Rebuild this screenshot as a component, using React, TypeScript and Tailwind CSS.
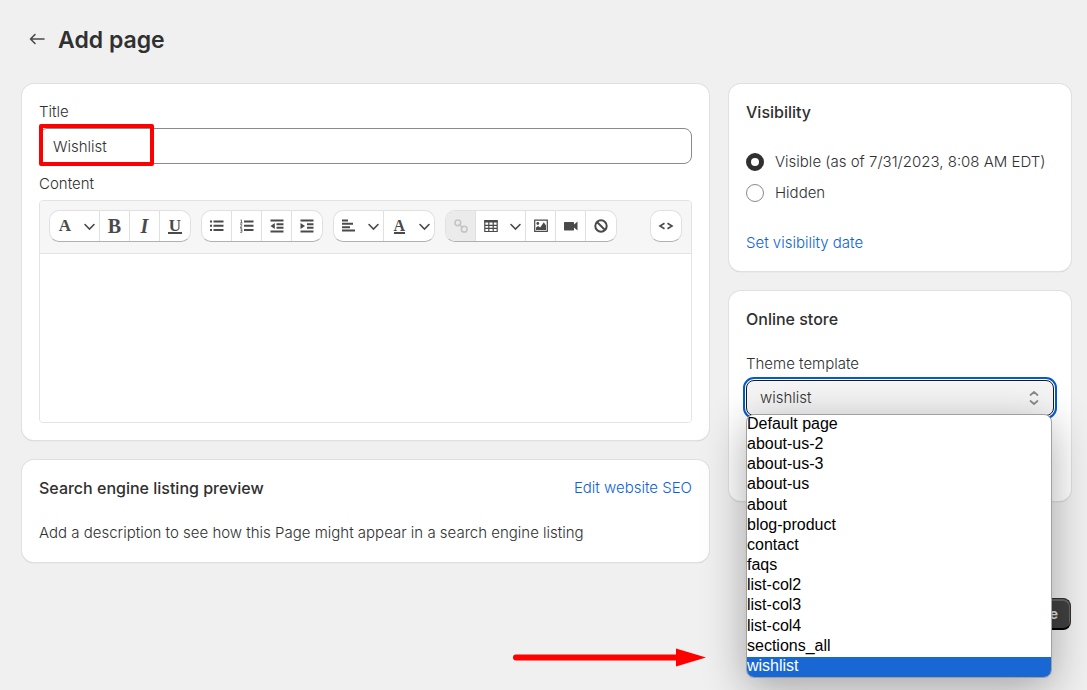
import React, { useState } from "react";

const templates = [
  "Default page",
  "about-us-2",
  "about-us-3",
  "about-us",
  "about",
  "blog-product",
  "contact",
  "faqs",
  "list-col2",
  "list-col3",
  "list-col4",
  "sections_all",
  "wishlist",
];

type ChildrenProps = { children: React.ReactNode };

function Card({ children }: ChildrenProps) {
  return (
    <section className="rounded-xl bg-white px-[17px] pt-[18px] shadow-[0_0_0_1px_#e0e0e0,0_1px_1px_#b8b8b8]">
      {children}
    </section>
  );
}

function Heading({ children }: ChildrenProps) {
  return <h2 className="text-base leading-5 font-medium text-[#303030]">{children}</h2>;
}

function ToolGroup({ children }: ChildrenProps) {
  return (
    <div className="flex h-8 divide-x divide-[#e0e0e0] overflow-hidden rounded-[10px] border border-[#e0e0e0] border-b-[#b0b0b0] bg-white">
      {children}
    </div>
  );
}

type ToolProps = ChildrenProps & { label: string; menu?: boolean; disabled?: boolean };

function Tool({ label, menu, disabled, children }: ToolProps) {
  return (
    <button
      type="button"
      aria-label={label}
      disabled={disabled}
      className={
        menu
          ? "flex w-[50px] items-center justify-between pr-[3px] pl-[7px]"
          : disabled
            ? "flex w-[30px] items-center justify-center bg-[#ebebeb] text-[#c4c4c4]"
            : "flex w-[30px] grow items-center justify-center"
      }
    >
      {children}
      {menu && (
        <svg className="h-4 w-[13px]" viewBox="0 0 13 16" fill="none" stroke="currentColor" strokeWidth="1.6" strokeLinecap="round">
          <path d="M2 6.500l4.500 4.500L11 6.500" />
        </svg>
      )}
    </button>
  );
}

function Glyph({ children }: ChildrenProps) {
  return (
    <svg className="h-4 w-4 shrink-0" viewBox="0 0 16 16" fill="currentColor" stroke="none">
      {children}
    </svg>
  );
}

function Toolbar() {
  return (
    <div role="toolbar" aria-label="Formatting" className="flex items-center gap-[10px] border-b border-[#e3e3e3] bg-[#f6f6f6] px-[9px] pt-[9px] pb-[11px] text-[#4a4a4a]">
      <ToolGroup>
        <Tool label="Formatting" menu>
          <span className="w-4 text-center font-['Liberation_Serif',serif] text-[17px] leading-4 font-bold">A</span>
        </Tool>
        <Tool label="Bold">
          <span className="font-['Liberation_Serif',serif] text-xl leading-5 font-bold">B</span>
        </Tool>
        <Tool label="Italic">
          <span className="font-['Liberation_Serif',serif] text-xl leading-5 font-bold italic">I</span>
        </Tool>
        <Tool label="Underline">
          <span className="border-b-2 border-current px-px font-['Liberation_Serif',serif] text-[17px] leading-[13px] font-bold">U</span>
        </Tool>
      </ToolGroup>
      <ToolGroup>
        <Tool label="Bulleted list">
          <Glyph>
            <path d="M1 2.500h2v2H1zM1 6.800h2v2H1zM1 11h2v2H1zM4.500 2.500h10v2h-10zM4.500 6.800h10v2h-10zM4.500 11h10v2h-10z" />
          </Glyph>
        </Tool>
        <Tool label="Numbered list">
          <Glyph>
            <path d="M5 2.500h9.500v2H5zM5 6.800h9.500v2H5zM5 11h9.500v2H5z" />
            <path d="M1.500 2h1v3M1 5h2.500M1.200 6.700h1.600v1.100L1.200 9.300h2M1.200 10.700h1.700v3.600H1.200M1.600 12.400h1.200" fill="none" stroke="currentColor" strokeWidth=".8" />
          </Glyph>
        </Tool>
        <Tool label="Outdent">
          <Glyph>
            <path d="M1.500 1.500h13v2h-13zM7.500 5.200h7v2h-7zM7.500 8.800h7v2h-7zM1.500 12.400h13v2h-13zM5.800 5v6L1.500 8z" />
          </Glyph>
        </Tool>
        <Tool label="Indent">
          <Glyph>
            <path d="M1.500 1.500h13v2h-13zM8 5.200h6.500v2H8zM8 8.800h6.500v2H8zM1.500 12.400h13v2h-13zM1.500 5v6L6 8z" />
          </Glyph>
        </Tool>
      </ToolGroup>
      <ToolGroup>
        <Tool label="Alignment" menu>
          <Glyph>
            <path d="M1 1.500h6v2H1zM1 4.800h11v2H1zM1 8.200h8v2H1zM1 11.500h13v2H1z" />
          </Glyph>
        </Tool>
        <Tool label="Color" menu>
          <span className="w-4 text-center">
            <span className="mx-auto block w-[11px] border-b-2 border-current font-['Liberation_Serif',serif] text-base leading-[13px] font-bold">A</span>
          </span>
        </Tool>
      </ToolGroup>
      <ToolGroup>
        <Tool label="Insert link" disabled>
          <Glyph>
            <g fill="none" stroke="currentColor" strokeWidth="1.500">
              <circle cx="4.800" cy="4.800" r="2.900" />
              <circle cx="11.200" cy="11.200" r="2.900" />
              <path d="M6 6l4 4" />
            </g>
          </Glyph>
        </Tool>
        <Tool label="Insert table" menu>
          <Glyph>
            <path d="M1.500 2h13v2.500h-13z" />
            <path d="M1.800 2.500h12.400v11H1.800zM2 7.400h12M2 10.400h12M5.800 3v10M10.200 3v10" fill="none" stroke="currentColor" strokeWidth="1.200" />
          </Glyph>
        </Tool>
        <Tool label="Insert image">
          <Glyph>
            <path d="M1.700 2.200h12.600v11.100H1.700z" fill="none" stroke="currentColor" strokeWidth="1.200" />
            <circle cx="4.800" cy="5.500" r="1.400" />
            <path d="M3 12V9.600L5.200 8l2 1.600 3.600-5.400L13 7.500V12z" />
          </Glyph>
        </Tool>
        <Tool label="Insert video">
          <Glyph>
            <path d="M1.800 4h8.400q.8 0 .8.800v1.700l3.500-3v9L11 9.600v2.100q0 .8-.8.800H1.800q-.8 0-.8-.8V4.800Q1 4 1.800 4z" />
          </Glyph>
        </Tool>
        <Tool label="Clear formatting">
          <Glyph>
            <g fill="none" stroke="currentColor" strokeWidth="2">
              <circle cx="8" cy="8" r="5.700" />
              <path d="M4 4l8 8" />
            </g>
          </Glyph>
        </Tool>
      </ToolGroup>
      <div className="ml-auto">
        <ToolGroup>
          <Tool label="Show HTML">
            <Glyph>
              <path d="M6.500 5.300L2 8l4.500 2.700M9.500 5.300L14 8l-4.500 2.700" fill="none" stroke="currentColor" strokeWidth="1.600" />
            </Glyph>
          </Tool>
        </ToolGroup>
      </div>
    </div>
  );
}

const radioClass =
  "m-0 h-[18px] w-[18px] shrink-0 appearance-none rounded-full border border-[#8a8a8a] bg-white checked:border-[5px] checked:border-[#303030]";

export default function App() {
  const [template, setTemplate] = useState("wishlist");
  return (
    <main className="relative min-h-screen overflow-hidden bg-[#f0f0f0] pr-4 pl-[22px] font-['Inter',sans-serif] text-[15px] leading-5 font-light text-[#303030]">
      <header className="flex h-[84px] items-center gap-3 pb-1 pl-[6px]">
        <a href="#pages" aria-label="Back to pages" className="pb-[3px] text-[#4a4a4a]">
          <svg className="h-[18px] w-[18px]" viewBox="0 0 18 18" fill="none" stroke="currentColor" strokeWidth="1.600" strokeLinecap="round" strokeLinejoin="round">
            <path d="M16 9H2.500M7 4.500L2.500 9 7 13.500" />
          </svg>
        </a>
        <h1 className="text-[23px] leading-8 font-semibold">Add page</h1>
      </header>

      <div className="grid grid-cols-[minmax(0,1fr)_342px] items-start gap-5">
        <div className="flex flex-col gap-5">
          <Card>
            <label htmlFor="title" className="block">Title</label>
            <div className="relative mt-[6px]">
              <input id="title" type="text" defaultValue="Wishlist" className="block h-9 w-full rounded-lg border border-[#8a8a8a] bg-white px-[13px] outline-none" />
              <div className="pointer-events-none absolute -top-1 left-0 h-[42px] w-[115px] rounded-xs border-4 border-[#ff0000]" />
            </div>
            <label htmlFor="content" className="mt-[10px] block">Content</label>
            <div className="mt-[6px] mb-[17px] overflow-hidden rounded-[4px] border border-[#e3e3e3]">
              <Toolbar />
              <textarea id="content" className="block h-[168px] w-full resize-none bg-white p-3 outline-none" />
            </div>
          </Card>
          <Card>
            <div className="flex items-center justify-between">
              <Heading>Search engine listing preview</Heading>
              <a href="#seo" className="text-[#0b63d8]">Edit website SEO</a>
            </div>
            <p className="pt-[25px] pb-[19px]">Add a description to see how this Page might appear in a search engine listing</p>
          </Card>
        </div>

        <div className="flex flex-col gap-5">
          <Card>
            <Heading>Visibility</Heading>
            <div className="mt-[30px] flex flex-col gap-[11px]">
              <label className="flex items-center gap-[11px]">
                <input type="radio" name="visibility" defaultChecked className={radioClass} />
                Visible (as of 7/31/2023, 8:08 AM EDT)
              </label>
              <label className="flex items-center gap-[11px]">
                <input type="radio" name="visibility" className={radioClass} />
                Hidden
              </label>
            </div>
            <div className="pt-[30px] pb-[18px]">
              <a href="#date" className="text-[#0b63d8]">Set visibility date</a>
            </div>
          </Card>
          <Card>
            <Heading>Online store</Heading>
            <label htmlFor="template" className="mt-[25px] block">Theme template</label>
            <div className="relative mt-[6px] mb-[85px]">
              <select
                id="template"
                value={template}
                onChange={(e) => setTemplate(e.target.value)}
                className="block h-9 w-full appearance-none rounded-lg border border-[#1a1a1a] bg-[#f5f5f5] px-[13px] outline-2 outline-offset-1 outline-[#005bd3]"
              >
                {templates.map((name) => (
                  <option key={name}>{name}</option>
                ))}
              </select>
              <svg className="pointer-events-none absolute top-[10px] right-3 h-4 w-4 text-[#8a8a8a]" viewBox="0 0 16 16" fill="none" stroke="currentColor" strokeWidth="1.700" strokeLinecap="round" strokeLinejoin="round">
                <path d="M4.500 5L8 2l3.500 3M4.500 11L8 14l3.500-3" />
              </svg>
              <ul
                role="listbox"
                aria-label="Theme template options"
                className="absolute top-[34px] right-[2px] left-0 z-10 grid h-[264px] auto-rows-fr overflow-hidden rounded-lg border border-[#a0a0a0] bg-white font-['Liberation_Sans',sans-serif] text-base leading-[18px] font-normal text-black shadow-[0_10px_44px_rgba(0,0,0,0.32)]"
              >
                {templates.map((name) => (
                  <li
                    key={name}
                    role="option"
                    aria-selected={name === template}
                    onClick={() => setTemplate(name)}
                    className={name === template ? "bg-[#1967d2] text-white" : ""}
                  >
                    {name}
                  </li>
                ))}
              </ul>
            </div>
          </Card>
        </div>
      </div>

      <div className="flex justify-end pt-9 pb-[50px]">
        <button type="button" className="h-8 rounded-lg border border-[#303030] border-b-2 border-b-black bg-[#404040] px-3 text-sm font-semibold text-[#e3e3e3] shadow-[inset_0_1px_0_1px_#666]">
          Save
        </button>
      </div>

      <svg aria-hidden="true" className="pointer-events-none absolute top-[648px] left-[512px] h-5 w-[195px]" viewBox="0 0 195 20">
        <path d="M4 9.500h164" stroke="#ff0000" strokeWidth="6" strokeLinecap="round" />
        <path d="M164 .5l30 9-30 9z" fill="#ff0000" />
      </svg>
    </main>
  );
}
